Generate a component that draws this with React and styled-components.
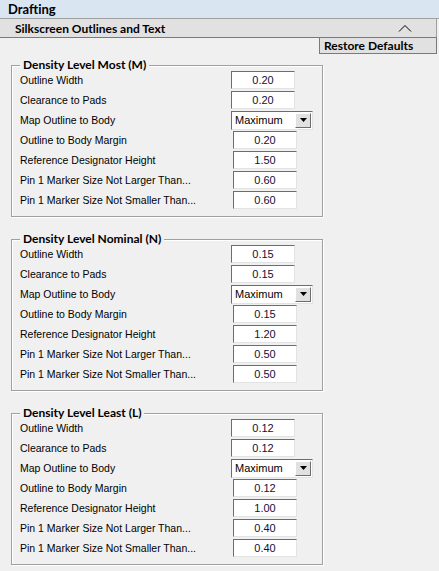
import styled, { createGlobalStyle } from 'styled-components';

const GlobalStyle = createGlobalStyle`
  html, body {
    margin: 0;
    padding: 0;
    background: #f0f0f0;
  }
  body {
    font-family: "Liberation Sans", Arial, sans-serif;
    color: #000;
  }
`;

const Page = styled.div`
  width: 439px;
  height: 571px;
  background: #f0f0f0;
  overflow: hidden;
`;

const TitleBar = styled.div`
  height: 18px;
  background: #d9e5f1;
  border-bottom: 1px solid #a0a0a0;
  padding-left: 8px;
  display: flex;
  align-items: center;
  font-family: Lato, "Liberation Sans", sans-serif;
  font-weight: 700;
  font-size: 13px;
`;

const SectionHeader = styled.div`
  height: 18px;
  margin-right: 2px;
  background: #e1e1e1;
  border-bottom: 1px solid #7a7a7a;
  border-right: 1px solid #a0a0a0;
  padding-left: 15px;
  padding-right: 24px;
  display: flex;
  align-items: center;
  justify-content: space-between;
  font-family: Lato, "Liberation Sans", sans-serif;
  font-weight: 700;
  font-size: 12px;
`;

const Toolbar = styled.div`
  display: flex;
  justify-content: flex-end;
  padding-right: 2px;
`;

const Button = styled.div`
  width: 118px;
  height: 17px;
  box-sizing: border-box;
  margin-top: -1px;
  background: #e1e1e1;
  border: 1px solid #7a7a7a;
  padding-left: 4px;
  display: flex;
  align-items: center;
  font-family: Lato, "Liberation Sans", sans-serif;
  font-weight: 700;
  font-size: 12px;
`;

const Groups = styled.div`
  display: flex;
  flex-direction: column;
  gap: 22px;
  padding: 11px 0 0 11px;
`;

const Group = styled.div`
  position: relative;
  width: 312px;
  box-sizing: border-box;
  border: 1px solid #a0a0a0;
  box-shadow: inset 1px 1px 0 #fff, 1px 1px 0 #fff;
  padding: 5px 0 7px 8px;
  display: flex;
  flex-direction: column;
  gap: 2px;
`;

const Legend = styled.div`
  position: absolute;
  top: -9px;
  left: 8px;
  padding: 0 3px;
  background: #f0f0f0;
  font-family: Lato, "Liberation Sans", sans-serif;
  font-weight: 700;
  font-size: 12px;
  line-height: 16px;
`;

const Row = styled.div`
  height: 18px;
  display: flex;
  align-items: center;
`;

const Label = styled.div`
  width: 211px;
  font-size: 10.5px;
  white-space: nowrap;
`;

const ValueBox = styled.div`
  width: 64px;
  height: 18px;
  box-sizing: border-box;
  margin-left: ${({ $shift }) => $shift || 0}px;
  background: #fff;
  border-top: 1px solid #6d6d6d;
  border-left: 1px solid #6d6d6d;
  border-right: 1px solid #e3e3e3;
  border-bottom: 1px solid #e3e3e3;
  display: flex;
  align-items: center;
  justify-content: center;
  font-size: 11px;
  color: #10103a;
`;

const Select = styled.div`
  width: 82px;
  height: 19px;
  box-sizing: border-box;
  background: #fff;
  border-top: 1px solid #6d6d6d;
  border-left: 1px solid #6d6d6d;
  border-right: 1px solid #e3e3e3;
  border-bottom: 1px solid #e3e3e3;
  display: flex;
  align-items: center;
  justify-content: space-between;
  padding: 1px 1px 1px 3px;
  font-size: 11px;
`;

const SelectArrow = styled.div`
  width: 16px;
  height: 15px;
  box-sizing: border-box;
  background: #e1e1e1;
  border-top: 1px solid #fff;
  border-left: 1px solid #fff;
  border-right: 1px solid #6d6d6d;
  border-bottom: 1px solid #6d6d6d;
  display: flex;
  align-items: center;
  justify-content: center;
`;

const Chevron = () => (
  <svg width="14" height="8" viewBox="0 0 14 8">
    <polyline points="1,7.5 7,1.5 13,7.5" fill="none" stroke="#000" strokeWidth="1" />
  </svg>
);

const Triangle = () => (
  <svg width="7" height="4" viewBox="0 0 7 4">
    <polygon points="0,0 7,0 3.5,4" fill="#000" />
  </svg>
);

const levels = [
  { title: 'Density Level Most (M)', values: ['0.20', '0.20', '0.20', '1.50', '0.60', '0.60'] },
  { title: 'Density Level Nominal (N)', values: ['0.15', '0.15', '0.15', '1.20', '0.50', '0.50'] },
  { title: 'Density Level Least (L)', values: ['0.12', '0.12', '0.12', '1.00', '0.40', '0.40'] },
];

const DensityGroup = ({ title, values }) => {
  const [width, clearance, margin, refdes, larger, smaller] = values;
  return (
    <Group>
      <Legend>{title}</Legend>
      <Row>
        <Label>Outline Width</Label>
        <ValueBox>{width}</ValueBox>
      </Row>
      <Row>
        <Label>Clearance to Pads</Label>
        <ValueBox>{clearance}</ValueBox>
      </Row>
      <Row>
        <Label>Map Outline to Body</Label>
        <Select>
          Maximum
          <SelectArrow>
            <Triangle />
          </SelectArrow>
        </Select>
      </Row>
      <Row>
        <Label>Outline to Body Margin</Label>
        <ValueBox $shift={2}>{margin}</ValueBox>
      </Row>
      <Row>
        <Label>Reference Designator Height</Label>
        <ValueBox $shift={2}>{refdes}</ValueBox>
      </Row>
      <Row>
        <Label>Pin 1 Marker Size Not Larger Than...</Label>
        <ValueBox $shift={2}>{larger}</ValueBox>
      </Row>
      <Row>
        <Label>Pin 1 Marker Size Not Smaller Than...</Label>
        <ValueBox $shift={2}>{smaller}</ValueBox>
      </Row>
    </Group>
  );
};

const App = () => (
  <Page>
    <GlobalStyle />
    <TitleBar>Drafting</TitleBar>
    <SectionHeader>
      Silkscreen Outlines and Text
      <Chevron />
    </SectionHeader>
    <Toolbar>
      <Button>Restore Defaults</Button>
    </Toolbar>
    <Groups>
      {levels.map((l) => (
        <DensityGroup key={l.title} title={l.title} values={l.values} />
      ))}
    </Groups>
  </Page>
);

export default App;
